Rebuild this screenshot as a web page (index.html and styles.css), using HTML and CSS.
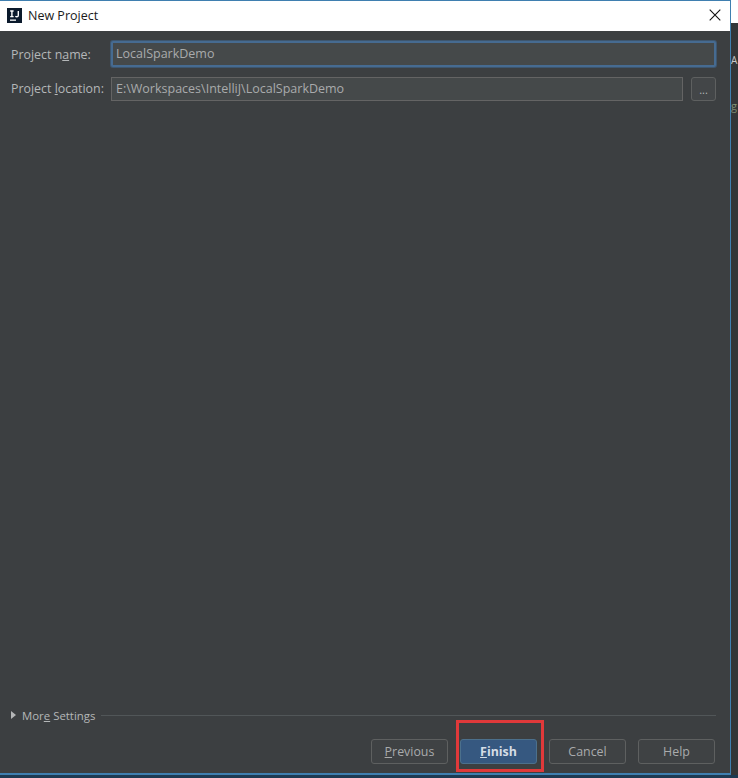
FILE: index.html
```html
<!DOCTYPE html>
<html lang="en">
<head>
<meta charset="utf-8">
<title>New Project</title>
<link rel="stylesheet" href="styles.css">
</head>
<body>
<div class="screen">
  <div class="main">
    <div class="window">
      <header class="titlebar">
        <svg class="app-icon" width="15" height="15" viewBox="0 0 15 15" aria-hidden="true">
          <rect width="15" height="15" fill="#0b1a2c"/>
          <rect x="3" y="11.5" width="6" height="1.3" fill="#fff"/>
          <path d="M3.2 3h3.4M4.9 3v5.6M3.2 8.6h3.4M11.3 3v4.2c0 1.1-.6 1.6-1.5 1.6-.6 0-1-.2-1.4-.6" fill="none" stroke="#fff" stroke-width="1.4"/>
        </svg>
        <span class="title">New Project</span>
        <svg class="close" width="12" height="12" viewBox="0 0 12 12" aria-hidden="true">
          <path d="M.7.7l10.6 10.6M11.3.7L.7 11.3" stroke="#111" stroke-width="1.1" fill="none"/>
        </svg>
      </header>
      <div class="content">
        <div class="form">
          <div class="row">
            <label class="label">Project n<u>a</u>me:</label>
            <div class="input focused">LocalSparkDemo</div>
          </div>
          <div class="row location">
            <label class="label">Project <u>l</u>ocation:</label>
            <div class="input">E:\Workspaces\IntelliJ\LocalSparkDemo</div>
            <div class="browse">...</div>
          </div>
        </div>
        <div class="more">
          <svg class="arrow" width="5" height="8" viewBox="0 0 5 8" aria-hidden="true"><path d="M0 0l5 4-5 4z" fill="#b4b6b7"/></svg>
          <span class="more-label">Mor<u>e</u> Settings</span>
          <span class="rule"></span>
        </div>
        <div class="buttons">
          <div class="btn"><u>P</u>revious</div>
          <div class="btn primary"><u>F</u>inish</div>
          <div class="btn">Cancel</div>
          <div class="btn">Help</div>
        </div>
      </div>
    </div>
    <div class="strip">
      <div class="strip-white"></div>
      <div class="strip-dark">
        <span class="strip-a">A</span>
        <span class="strip-g">g</span>
      </div>
    </div>
  </div>
  <div class="taskbar"></div>
  <div class="highlight"></div>
</div>
</body>
</html>
```
FILE: styles.css
```css
* { box-sizing: border-box; }
html, body { margin: 0; padding: 0; }
body {
  width: 738px;
  height: 778px;
  overflow: hidden;
  background: #3c3f41;
  font-family: "Open Sans", "Noto Sans", "Liberation Sans", sans-serif;
  font-size: 12.4px;
  color: #b4b7b8;
}
u { text-underline-offset: 1px; text-decoration-thickness: 1px; }
.screen { position: relative; width: 738px; height: 778px; display: flex; flex-direction: column; }
.main { display: flex; height: 775px; }
.window {
  width: 731px;
  height: 775px;
  border: 1px solid #3f7fb0;
  border-width: 1px 1px 2px 0;
  display: flex;
  flex-direction: column;
}
.titlebar {
  height: 30px;
  flex: none;
  background: #fff;
  display: flex;
  align-items: center;
  padding: 0 9px 2px 7px;
  color: #1a1a1a;
}
.app-icon { margin-right: 6px; }
.title { font-size: 12.5px; }
.close { margin-left: auto; }
.content {
  flex: 1;
  display: flex;
  flex-direction: column;
  background: #3c3f41;
  padding: 10px 14px 9px 11px;
}
.form { display: flex; flex-direction: column; gap: 10px; flex: 1; }
.row { display: flex; align-items: center; height: 26px; }
.location { height: 24px; }
.location .label { padding-bottom: 1px; }
.label { width: 100px; flex: none; white-space: nowrap; }
.input {
  flex: 1;
  height: 24px;
  background: #45494a;
  border: 1px solid #646464;
  padding: 0 4px;
  line-height: 22px;
  font-size: 12.5px;
  color: #a9abac;
  white-space: nowrap;
}
.focused {
  height: 26px;
  line-height: 22px;
  border: 2px solid #466b91;
  border-radius: 2px;
  padding: 0 3px;
  box-shadow: 0 0 0 1px #3e566e;
}
.location .input { flex: none; width: 572px; }
.browse {
  width: 25px;
  height: 24px;
  margin-left: 8px;
  border: 1px solid #5e6060;
  border-radius: 3px;
  text-align: center;
  line-height: 24px;
  font-size: 11px;
  color: #b4b7b8;
  background: #434648;
}
.more { display: flex; align-items: center; height: 16px; }
.arrow { margin-right: 6px; }
.more-label { white-space: nowrap; font-size: 11.4px; }
.rule { flex: 1; height: 1px; background: #515658; margin-left: 6px; }
.buttons { display: flex; justify-content: flex-end; gap: 12px; margin: 16px 1px 0 0; }
.btn {
  width: 77px;
  height: 25px;
  border: 1px solid #5e6060;
  border-radius: 3px;
  background: #3f4244;
  text-align: center;
  line-height: 23px;
  color: #a9abac;
}
.btn.primary {
  background: #365880;
  border-color: #4c708c;
  color: #d5dde5;
  font-weight: 700;
}
.strip { width: 7px; display: flex; flex-direction: column; }
.strip-white { height: 23px; background: #fff; }
.strip-dark { flex: 1; background: #333638; overflow: hidden; display: flex; flex-direction: column; padding-top: 30px; }
.strip-a { font-size: 10px; line-height: 14px; color: #c8c8c8; }
.strip-g { font-size: 11px; line-height: 14px; color: #7f8f75; margin-top: 32px; }
.taskbar { height: 3px; background: #1d3a52; }
.highlight {
  position: absolute;
  left: 456px;
  top: 720px;
  width: 88px;
  height: 52px;
  border: 3px solid #e0393a;
}
```
